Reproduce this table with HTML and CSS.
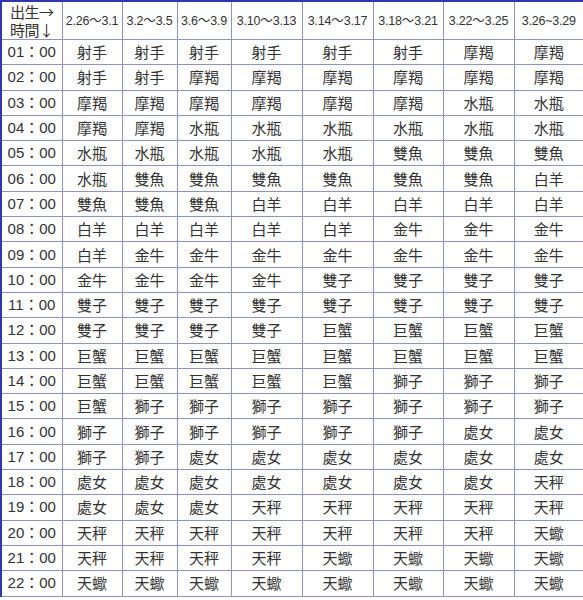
FILE: index.html
```html
<!DOCTYPE html>
<html lang="zh-Hant">
<head>
<meta charset="utf-8">
<link rel="stylesheet" href="styles.css">
</head>
<body>
<table class="chart">
<colgroup>
<col class="c0"><col class="c1"><col class="c2"><col class="c3"><col class="c4"><col class="c5"><col class="c6"><col class="c7"><col class="c8">
</colgroup>
<thead>
<tr class="head">
<th class="corner">出生→<br>時間↓</th>
<th>2.26～3.1</th><th>3.2～3.5</th><th>3.6～3.9</th><th>3.10～3.13</th><th>3.14～3.17</th><th>3.18～3.21</th><th>3.22～3.25</th><th>3.26~3.29</th>
</tr>
</thead>
<tbody>
<tr><td class="t">01：00</td><td>射手</td><td>射手</td><td>射手</td><td>射手</td><td>射手</td><td>射手</td><td>摩羯</td><td>摩羯</td></tr>
<tr><td class="t">02：00</td><td>射手</td><td>射手</td><td>摩羯</td><td>摩羯</td><td>摩羯</td><td>摩羯</td><td>摩羯</td><td>摩羯</td></tr>
<tr><td class="t">03：00</td><td>摩羯</td><td>摩羯</td><td>摩羯</td><td>摩羯</td><td>摩羯</td><td>摩羯</td><td>水瓶</td><td>水瓶</td></tr>
<tr><td class="t">04：00</td><td>摩羯</td><td>摩羯</td><td>水瓶</td><td>水瓶</td><td>水瓶</td><td>水瓶</td><td>水瓶</td><td>水瓶</td></tr>
<tr><td class="t">05：00</td><td>水瓶</td><td>水瓶</td><td>水瓶</td><td>水瓶</td><td>水瓶</td><td>雙魚</td><td>雙魚</td><td>雙魚</td></tr>
<tr><td class="t">06：00</td><td>水瓶</td><td>雙魚</td><td>雙魚</td><td>雙魚</td><td>雙魚</td><td>雙魚</td><td>雙魚</td><td>白羊</td></tr>
<tr><td class="t">07：00</td><td>雙魚</td><td>雙魚</td><td>雙魚</td><td>白羊</td><td>白羊</td><td>白羊</td><td>白羊</td><td>白羊</td></tr>
<tr><td class="t">08：00</td><td>白羊</td><td>白羊</td><td>白羊</td><td>白羊</td><td>白羊</td><td>金牛</td><td>金牛</td><td>金牛</td></tr>
<tr><td class="t">09：00</td><td>白羊</td><td>金牛</td><td>金牛</td><td>金牛</td><td>金牛</td><td>金牛</td><td>金牛</td><td>金牛</td></tr>
<tr><td class="t">10：00</td><td>金牛</td><td>金牛</td><td>金牛</td><td>金牛</td><td>雙子</td><td>雙子</td><td>雙子</td><td>雙子</td></tr>
<tr><td class="t">11：00</td><td>雙子</td><td>雙子</td><td>雙子</td><td>雙子</td><td>雙子</td><td>雙子</td><td>雙子</td><td>雙子</td></tr>
<tr><td class="t">12：00</td><td>雙子</td><td>雙子</td><td>雙子</td><td>雙子</td><td>巨蟹</td><td>巨蟹</td><td>巨蟹</td><td>巨蟹</td></tr>
<tr><td class="t">13：00</td><td>巨蟹</td><td>巨蟹</td><td>巨蟹</td><td>巨蟹</td><td>巨蟹</td><td>巨蟹</td><td>巨蟹</td><td>巨蟹</td></tr>
<tr><td class="t">14：00</td><td>巨蟹</td><td>巨蟹</td><td>巨蟹</td><td>巨蟹</td><td>巨蟹</td><td>獅子</td><td>獅子</td><td>獅子</td></tr>
<tr><td class="t">15：00</td><td>巨蟹</td><td>獅子</td><td>獅子</td><td>獅子</td><td>獅子</td><td>獅子</td><td>獅子</td><td>獅子</td></tr>
<tr><td class="t">16：00</td><td>獅子</td><td>獅子</td><td>獅子</td><td>獅子</td><td>獅子</td><td>獅子</td><td>處女</td><td>處女</td></tr>
<tr><td class="t">17：00</td><td>獅子</td><td>獅子</td><td>處女</td><td>處女</td><td>處女</td><td>處女</td><td>處女</td><td>處女</td></tr>
<tr><td class="t">18：00</td><td>處女</td><td>處女</td><td>處女</td><td>處女</td><td>處女</td><td>處女</td><td>處女</td><td>天秤</td></tr>
<tr><td class="t">19：00</td><td>處女</td><td>處女</td><td>處女</td><td>天秤</td><td>天秤</td><td>天秤</td><td>天秤</td><td>天秤</td></tr>
<tr><td class="t">20：00</td><td>天秤</td><td>天秤</td><td>天秤</td><td>天秤</td><td>天秤</td><td>天秤</td><td>天秤</td><td>天蠍</td></tr>
<tr><td class="t">21：00</td><td>天秤</td><td>天秤</td><td>天秤</td><td>天秤</td><td>天蠍</td><td>天蠍</td><td>天蠍</td><td>天蠍</td></tr>
<tr><td class="t">22：00</td><td>天蠍</td><td>天蠍</td><td>天蠍</td><td>天蠍</td><td>天蠍</td><td>天蠍</td><td>天蠍</td><td>天蠍</td></tr>
</tbody>
</table>
</body>
</html>
```
FILE: styles.css
```css
html, body {
  margin: 0;
  padding: 0;
  background: #ffffff;
  overflow: hidden;
  height: 600px;
}
.chart {
  border-collapse: collapse;
  table-layout: fixed;
  width: 583px;
  border: 2px solid #2e36b4;
  border-bottom: 1px solid #8d94c2;
  font-family: "Liberation Sans", "Noto Sans CJK TC", sans-serif;
  color: #333333;
}
.c0 { width: 61px; }
.c1 { width: 60px; }
.c2 { width: 55px; }
.c3 { width: 54px; }
.c4 { width: 71px; }
.c5 { width: 71px; }
.c6 { width: 70px; }
.c7 { width: 71px; }
.c8 { width: 70px; }
.chart th, .chart td {
  border: 1px solid #8d94c2;
  padding: 0;
  text-align: center;
  white-space: nowrap;
  font-weight: normal;
}
.head th {
  height: 37px;
  font-size: 12.5px;
  line-height: 16px;
  letter-spacing: -0.2px;
}
.head .corner {
  font-family: "Noto Sans CJK TC", sans-serif;
  font-size: 15px;
  line-height: 18px;
  letter-spacing: -0.5px;
}
.chart td {
  height: 24.3px;
  font-size: 15px;
  line-height: 18px;
  font-family: "Noto Sans CJK TC", sans-serif;
}
.chart td.t {
  font-family: "Liberation Sans", "Noto Sans CJK TC", sans-serif;
}
```
